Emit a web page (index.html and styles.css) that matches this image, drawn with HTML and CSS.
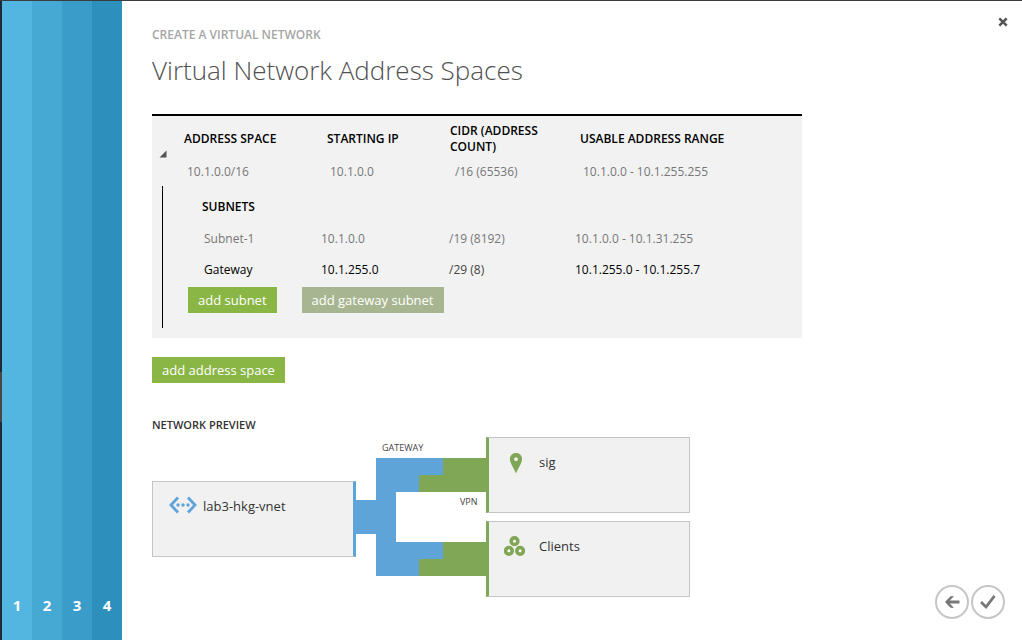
FILE: index.html
```html
<!DOCTYPE html>
<html lang="en">
<head>
<meta charset="utf-8">
<title>Create a virtual network</title>
<link rel="stylesheet" href="styles.css">
</head>
<body>
<div class="wizard">
  <ol class="steps">
    <li class="step step-1">1</li>
    <li class="step step-2">2</li>
    <li class="step step-3">3</li>
    <li class="step step-4">4</li>
  </ol>

  <main class="content">
    <p class="eyebrow">CREATE A VIRTUAL NETWORK</p>
    <h1 class="title">Virtual Network Address Spaces</h1>

    <section class="panel">
      <div class="space">
        <button class="toggle" type="button" aria-label="Collapse address space" aria-expanded="true">
          <svg width="8" height="8" viewBox="0 0 8 8"><path d="M7.500 0.500V7.500H0.500Z" fill="#555"/></svg>
        </button>
        <table class="space-table">
          <thead>
            <tr>
              <th class="space-name">ADDRESS SPACE</th>
              <th class="space-ip">STARTING IP</th>
              <th class="space-cidr">CIDR (ADDRESS COUNT)</th>
              <th>USABLE ADDRESS RANGE</th>
            </tr>
          </thead>
          <tbody>
            <tr><td>10.1.0.0/16</td><td>10.1.0.0</td><td class="space-count">/16 (65536)</td><td>10.1.0.0 - 10.1.255.255</td></tr>
          </tbody>
        </table>
      </div>

      <div class="subnets">
        <h2 class="subnets-title" id="subnets">SUBNETS</h2>
        <table class="subnet-table" aria-labelledby="subnets">
          <tbody>
            <tr><td class="subnet-name">Subnet-1</td><td class="subnet-ip">10.1.0.0</td><td class="subnet-cidr">/19 (8192)</td><td>10.1.0.0 - 10.1.31.255</td></tr>
            <tr class="gateway"><td>Gateway</td><td>10.1.255.0</td><td class="count">/29 (8)</td><td>10.1.255.0 - 10.1.255.7</td></tr>
          </tbody>
        </table>
        <div class="subnet-actions">
          <button class="btn" type="button">add subnet</button>
          <button class="btn" type="button" disabled>add gateway subnet</button>
        </div>
      </div>
    </section>

    <button class="btn add-space" type="button">add address space</button>

    <h2 class="preview-title">NETWORK PREVIEW</h2>
    <div class="preview">
      <div class="card card-vnet">
        <svg class="vnet-icon" width="28" height="18" viewBox="0 0 28 18">
          <path d="M9 1.500L2 9l7 7.500M19 1.500L26 9l-7 7.500" fill="none" stroke="#5fa4d9" stroke-width="2.800"/>
          <g fill="#5fa4d9"><circle cx="9" cy="9" r="1.700"/><circle cx="14" cy="9" r="1.700"/><circle cx="19" cy="9" r="1.700"/></g>
        </svg>
        <span>lab3-hkg-vnet</span>
      </div>
      <svg class="connector" width="130" height="160" viewBox="0 0 130 160">
        <path d="M0 63H20V21H87V38H63V55H40V105H87V122H63V139H20V97H0Z" fill="#5fa4d9"/>
        <path d="M87 21H130V55H63V38H87ZM87 105H130V139H63V122H87Z" fill="#80a755"/>
        <text x="26" y="14">GATEWAY</text>
        <text x="104" y="68">VPN</text>
      </svg>
      <div class="endpoints">
        <div class="card card-endpoint">
          <span class="endpoint-icon">
            <svg width="14" height="22" viewBox="0 0 14 22"><path fill="#80a755" fill-rule="evenodd" d="M7 1C3.300 1 0.900 3.700 0.900 7.100C0.900 11 4.500 15.500 7 21.500C9.500 15.500 13.100 11 13.100 7.100C13.100 3.700 10.700 1 7 1ZM7 5.300A1.900 1.900 0 1 0 7 9.100A1.900 1.900 0 1 0 7 5.300Z"/></svg>
          </span>
          <span>sig</span>
        </div>
        <div class="card card-endpoint">
          <span class="endpoint-icon">
            <svg width="24" height="20" viewBox="0 0 24 20"><g fill="#fff" stroke="#80a755" stroke-width="3.600"><circle cx="10.500" cy="5.200" r="3.300"/><circle cx="4.900" cy="14.800" r="3.300"/><circle cx="16.100" cy="14.800" r="3.300"/></g></svg>
          </span>
          <span>Clients</span>
        </div>
      </div>
    </div>
  </main>

  <div class="rail">
    <button class="close" type="button" aria-label="Close">
      <svg width="10" height="10" viewBox="0 0 10 10"><path d="M1.300 1.300L8.700 8.700M8.700 1.300L1.300 8.700" stroke="#555" stroke-width="2.500"/></svg>
    </button>
    <div class="nav">
      <button class="round" type="button" aria-label="Back">
        <svg width="16" height="14" viewBox="0 0 16 14"><path d="M1 7L6.500 1.300H10L5.800 5.600H15.500V8.400H5.800L10 12.700H6.500Z" fill="#777"/></svg>
      </button>
      <button class="round" type="button" aria-label="Complete">
        <svg width="18" height="16" viewBox="0 0 18 16"><path d="M2 8L7 13L15.500 1.800" fill="none" stroke="#777" stroke-width="2.800"/></svg>
      </button>
    </div>
  </div>
</div>
</body>
</html>
```
FILE: styles.css
```css
* { box-sizing: border-box; }

body {
  margin: 0;
  background: #fff;
  color: #333;
  font-family: "Open Sans", "Noto Sans", sans-serif;
  font-size: 12px;
  line-height: 16px;
}

svg { display: block; }
h1, h2, p, ol { margin: 0; padding: 0; }
button { font: inherit; border: 0; padding: 0; background: none; cursor: pointer; }
table { border-collapse: collapse; table-layout: fixed; width: 100%; }
th, td { padding: 0; text-align: left; }

.wizard {
  display: flex;
  min-height: 100vh;
  border-top: 1px solid #3a3c40;
}

.steps {
  display: flex;
  list-style: none;
  padding-left: 2px;
  background: linear-gradient(#1c2b36 371px, #4a4645 371px, #4a4645 421px, #1c2b36 421px);
}
.step {
  display: flex;
  align-items: flex-end;
  justify-content: center;
  width: 30px;
  padding-bottom: 27px;
  color: #fff;
  font-size: 15px;
  font-weight: 700;
}
.step-1 { background: #52b6e1; }
.step-2 { background: #46a9d4; }
.step-3 { background: #3a9dc9; }
.step-4 { background: #2c8fbc; }

.content {
  flex: 1;
  min-width: 0;
  max-width: 680px;
  padding: 26px 0 24px 30px;
}

.eyebrow { color: #a6a6a6; font-weight: 600; }
.title {
  margin-top: 7px;
  color: #505050;
  font-size: 26px;
  font-weight: 300;
  line-height: 40px;
}

.panel {
  margin-top: 24px;
  padding-bottom: 10px;
  border-top: 2px solid #000;
  background: #f2f2f2;
}
.space { display: flex; align-items: flex-start; }
.toggle { flex: none; width: 32px; padding: 34px 7px 0; }
.space-table th {
  height: 44px;
  padding: 2px 20px 0 0;
  color: #000;
  font-weight: 600;
  vertical-align: middle;
}
.space-table td { height: 26px; padding: 0 0 2px 3px; color: #777; vertical-align: middle; }
.space-table .space-count { padding-left: 5px; }
.space-name { width: 143px; }
.space-ip { width: 123px; }
.space-cidr { width: 130px; }

.subnets {
  margin-left: 10px;
  padding: 13px 0 15px 25px;
  border-left: 1px solid #000;
}
.subnets-title { margin: 0 0 8px 14px; color: #000; font-size: 12px; font-weight: 600; line-height: 16px; }
.subnet-table td { height: 31px; color: #777; }
.subnet-table .subnet-name { width: 133px; }
.subnet-table .subnet-ip { width: 128px; }
.subnet-table .subnet-cidr { width: 126px; }
.subnet-table td:first-child { padding-left: 16px; }
.subnet-table .gateway td { color: #000; }
.subnet-table .gateway .count { color: #444; }
.subnet-actions { display: flex; gap: 25px; margin-top: 2px; }

.btn {
  height: 26px;
  padding: 0 10px;
  background: #8ab646;
  color: #fff;
  font-size: 13px;
  line-height: 26px;
  white-space: nowrap;
}
.btn:disabled { background: #a7b691; cursor: default; }
.add-space { display: block; margin-top: 19px; }

.preview-title { margin: 34px 0 4px; font-size: 11px; font-weight: 600; line-height: 16px; }
.preview { display: flex; align-items: center; color: #333; font-size: 13px; }
.card {
  display: flex;
  align-items: flex-start;
  width: 204px;
  height: 76px;
  padding-top: 14px;
  border: 1px solid #c3c6c8;
  background: #f1f1f1;
  line-height: 20px;
}
.card-vnet { gap: 6px; padding-left: 16px; border-right: 3px solid #5fa4d9; margin-top: 4px; }
.connector text { fill: #444; font-size: 9px; }
.endpoints { display: flex; flex-direction: column; gap: 8px; }
.card-endpoint { padding-left: 14px; border-left: 3px solid #80a755; }
.endpoint-icon { display: flex; justify-content: center; width: 26px; margin-right: 10px; }

.rail {
  display: flex;
  flex-direction: column;
  justify-content: space-between;
  align-items: flex-end;
  margin-left: auto;
  padding: 12px 10px 21px 0;
}
.close { padding: 4px; }
.nav { display: flex; gap: 2px; margin-right: 7px; }
.round {
  display: flex;
  align-items: center;
  justify-content: center;
  width: 34px;
  height: 34px;
  border: 2px solid #c6c6c6;
  border-radius: 50%;
}
```
